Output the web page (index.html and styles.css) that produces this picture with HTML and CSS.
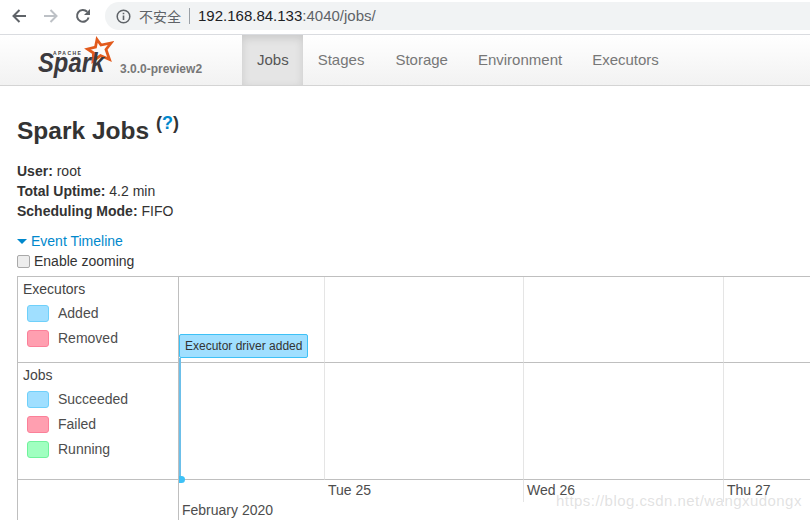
FILE: index.html
```html
<!DOCTYPE html>
<html lang="en">
<head>
<meta charset="utf-8">
<title>Spark Jobs</title>
<link rel="stylesheet" href="styles.css">
</head>
<body>
<header class="chrome">
  <div class="chrome-btns">
    <svg class="cbtn" width="16" height="16" viewBox="0 0 16 16"><path d="M15 8H2.500M8.500 2 2.500 8l6 6" fill="none" stroke="#5f6368" stroke-width="2"/></svg>
    <svg class="cbtn" width="16" height="16" viewBox="0 0 16 16"><path d="M1 8h12.500M7.500 2l6 6-6 6" fill="none" stroke="#bdc1c6" stroke-width="2"/></svg>
    <svg class="cbtn" width="16" height="16" viewBox="0 0 16 16"><path d="M13.600 9.500A5.900 5.900 0 1 1 12.200 3.800" fill="none" stroke="#5f6368" stroke-width="2"/><path d="M15 1v6H9z" fill="#5f6368"/></svg>
  </div>
  <div class="omnibox">
    <svg class="info" width="15" height="15" viewBox="0 0 15 15"><circle cx="7.500" cy="7.500" r="6.300" fill="none" stroke="#5f6368" stroke-width="1.500"/><path d="M7.500 6.500v4.500M7.500 3.800v1.500" stroke="#5f6368" stroke-width="1.600"/></svg>
    <span class="insecure">不安全</span>
    <span class="sep"></span>
    <span class="url">192.168.84.133<span class="url-dim">:4040/jobs/</span></span>
  </div>
</header>

<nav class="navbar">
  <div class="brand">
    <div class="logo">
      <svg class="star" width="30" height="30" viewBox="0 0 30 30"><path d="M13 4.500 17 10 27 8 22 14.500 25.500 24.500 16.500 20.500 9 26 9.500 18 3.500 14 11.500 12Z" fill="none" stroke="#e25a1c" stroke-width="2.800" stroke-linejoin="miter"/></svg>
      <span class="apache">APACHE</span>
      <span class="spark">Spark</span>
    </div>
    <span class="version">3.0.0-preview2</span>
  </div>
  <ul class="tabs">
    <li class="tab active">Jobs</li>
    <li class="tab">Stages</li>
    <li class="tab">Storage</li>
    <li class="tab">Environment</li>
    <li class="tab">Executors</li>
  </ul>
</nav>

<main class="page">
  <h3 class="title">Spark Jobs <sup class="help">(<a>?</a>)</sup></h3>
  <ul class="summary">
    <li><strong>User:</strong> root</li>
    <li><strong>Total Uptime:</strong> 4.2 min</li>
    <li><strong>Scheduling Mode:</strong> FIFO</li>
  </ul>
  <div class="toggle"><span class="arrow"></span><a>Event Timeline</a></div>
  <label class="zoom"><input type="checkbox"><span>Enable zooming</span></label>

  <section class="timeline">
    <div class="cell legend row1">
      <div class="group">Executors</div>
      <div class="item"><span class="swatch blue"></span>Added</div>
      <div class="item"><span class="swatch red"></span>Removed</div>
    </div>
    <div class="cell col a row1 first"><div class="event">Executor driver added</div><span class="stem"></span></div>
    <div class="cell col b row1"></div>
    <div class="cell col c row1"></div>
    <div class="cell col d row1"></div>

    <div class="cell legend row2">
      <div class="group">Jobs</div>
      <div class="item"><span class="swatch blue"></span>Succeeded</div>
      <div class="item"><span class="swatch red"></span>Failed</div>
      <div class="item"><span class="swatch green"></span>Running</div>
    </div>
    <div class="cell col a row2 first"><span class="dot"></span></div>
    <div class="cell col b row2"></div>
    <div class="cell col c row2"></div>
    <div class="cell col d row2"></div>

    <div class="cell legend row3"></div>
    <div class="cell axis a row3 first"><span class="month">February 2020</span></div>
    <div class="cell axis b row3"><span class="day">Tue 25</span></div>
    <div class="cell axis c row3"><span class="day">Wed 26</span></div>
    <div class="cell axis d row3"><span class="day">Thu 27</span></div>
  </section>
</main>
<div class="watermark">https://blog.csdn.net/wangxudongx</div>
</body>
</html>
```
FILE: styles.css
```css
* { box-sizing: border-box; }
html, body { margin: 0; padding: 0; height: 520px; overflow: hidden; background: #fff; }
body { font-family: "Liberation Sans", Arial, sans-serif; font-size: 14px; line-height: 20px; color: #333; position: relative; }

.chrome { height: 35px; display: flex; align-items: flex-start; border-bottom: 1px solid #dadce0; background: #fff; }
.chrome-btns { width: 105px; height: 30px; display: flex; align-items: center; padding-left: 11px; gap: 16px; padding-top: 1px; }
.omnibox { flex: 1; height: 28px; margin-top: 2px; background: #f1f3f4; border-radius: 14px 0 0 14px; display: flex; align-items: center; padding-left: 11px; }
.info { flex: none; }
.insecure { margin-left: 8px; font-family: "Noto Sans CJK SC", sans-serif; font-size: 14px; color: #5f6368; }
.sep { width: 1px; height: 16px; background: #9aa0a6; margin: 0 8px; }
.url { font-size: 15px; color: #202124; }
.url-dim { color: #5f6368; }

.navbar { height: 51px; display: flex; background: linear-gradient(#fff, #f2f2f2); border-bottom: 1px solid #d4d4d4; }
.brand { width: 242px; position: relative; display: flex; }
.logo { position: relative; width: 120px; }
.star { position: absolute; left: 84px; top: 0; }
.apache { position: absolute; left: 53px; top: 15px; font-size: 5px; line-height: 6px; font-weight: bold; letter-spacing: 1.400px; color: #444; }
.spark { position: absolute; left: 38px; top: 18px; font-size: 28px; line-height: 20px; font-weight: bold; font-style: italic; transform: scaleX(0.85); transform-origin: left center; color: #3c3a3e; }
.version { position: absolute; left: 120px; top: 26px; font-size: 12px; line-height: 17px; font-weight: bold; color: #777; }
.tabs { list-style: none; display: flex; margin: 0; padding: 0; height: 50px; }
.tab { padding: 0 15px; line-height: 50px; font-size: 15px; color: #777; }
.tab.active { color: #555; background: #e5e5e5; box-shadow: inset 0 3px 8px rgba(0, 0, 0, 0.125); padding-right: 14px; }
.tab.active + .tab { padding-right: 16px; }

.page { padding: 0 0 0 17px; }
.title { margin: 0; padding-top: 29px; height: 75px; font-size: 24.500px; line-height: 32px; font-weight: bold; color: #333; }
.help { font-size: 18px; line-height: 0; vertical-align: 10px; font-weight: bold; color: #333; }
.help a, .toggle a { color: #0088cc; }
.summary { list-style: none; margin: 0; padding: 0; }
.toggle { margin-top: 10px; display: flex; align-items: center; color: #0088cc; height: 20px; }
.arrow { width: 0; height: 0; border-left: 5px solid transparent; border-right: 5px solid transparent; border-top: 5px solid #0088cc; margin-right: 4px; margin-top: 1px; }
.zoom { display: flex; align-items: center; height: 20px; }
.zoom input { appearance: none; width: 13px; height: 13px; margin: 0 4px 0 0; border: 1px solid #a9a9a9; border-radius: 2px; background: #ededed; }

.timeline { width: 793px; height: 244px; margin-top: 5px; display: grid; grid-template-columns: 161px 146px 199px 200px 87px; grid-template-rows: 86px 117px 41px; border-top: 1px solid #bfbfbf; border-left: 1px solid #bfbfbf; }
.cell { position: relative; }
.legend { border-right: 1px solid #bfbfbf; padding: 2px 0 0 5px; }
.col { border-right: 1px solid #e5e5e5; }
.col.d, .axis.d { border-right: 0; }
.row1 { border-bottom: 1px solid #bfbfbf; }
.row2 { border-bottom: 1px solid #bfbfbf; }
.legend.row3 { border-right: 1px solid #bfbfbf; }
.row2.first { border-left: 2px solid #6cbfe9; }
.group { height: 20px; line-height: 20px; margin-bottom: 4px; color: #444; }
.item { display: flex; align-items: center; height: 20px; margin-bottom: 5px; margin-left: 4px; color: #4d4d4d; }
.swatch { width: 22px; height: 17px; border-radius: 3px; border: 1px solid; margin-right: 9px; }
.swatch.blue { background: #a0dfff; border-color: #6fd0fa; }
.swatch.red { background: #ff9fb0; border-color: #fb8099; }
.swatch.green { background: #a0ffc0; border-color: #70f29c; }
.event { position: absolute; left: 0; top: 57px; width: 129px; height: 24px; background: #a0dfff; border: 1px solid #3ec1f6; border-radius: 2px; font-size: 12px; line-height: 22px; padding-left: 5px; color: #333; white-space: nowrap; }
.stem { position: absolute; left: 0; top: 81px; width: 2px; height: 5px; background: #6cbfe9; }
.dot { position: absolute; left: -2px; bottom: -4px; width: 6px; height: 7px; border-radius: 0 4px 4px 0; background: #3ec1f6; }
.axis { height: 41px; }
.axis.b, .axis.c { border-right: 1px solid #e5e5e5; height: 22px; }
.day { position: absolute; left: 3px; top: 0; font-size: 14px; line-height: 20px; color: #4d4d4d; }
.month { position: absolute; left: 3px; top: 20px; white-space: nowrap; color: #4d4d4d; }
.watermark { position: absolute; left: 556px; top: 491px; font-size: 15px; line-height: 20px; color: rgba(190, 190, 190, 0.45); letter-spacing: 0.450px; white-space: nowrap; }
```
